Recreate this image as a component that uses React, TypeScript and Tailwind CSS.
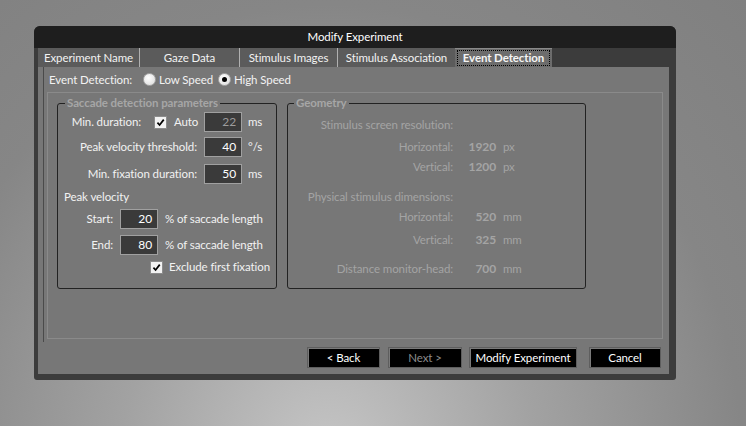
import { ReactNode } from "react";

const CheckBox = () => (
    <span className="flex h-[13px] w-[13px] shrink-0 items-center justify-center border border-[#8c8c8c] bg-[#f2f2f2]">
        <svg viewBox="0 0 10 10" className="h-[9px] w-[9px]">
            <path d="M1.6 5.2 L4 7.8 L8.6 1.8" fill="none" stroke="#000" strokeWidth="1.9" />
        </svg>
    </span>
);

const Radio = ({ checked }: { checked?: boolean }) => (
    <span className="flex h-[13px] w-[13px] shrink-0 items-center justify-center rounded-full border border-[#a8a8a8] bg-[radial-gradient(circle_at_40%_35%,#ffffff,#d8d8d8)]">
        {checked ? <span className="h-[5px] w-[5px] rounded-full bg-black" /> : null}
    </span>
);

const NumBox = ({ value, dim }: { value: string; dim?: boolean }) => (
    <div
        className={
            dim
                ? "h-[20px] w-[38px] shrink-0 border border-[#a0a0a0] bg-[#3a3a3a] pr-[5px] text-right text-[12px] leading-[18px] text-[#9c9c9c]"
                : "h-[20px] w-[38px] shrink-0 border border-[#a0a0a0] bg-[#3a3a3a] pr-[5px] text-right text-[12px] leading-[18px] text-white"
        }
    >
        {value}
    </div>
);

const GeoRow = ({ label, value, unit, className }: { label: string; value?: string; unit?: string; className: string }) => (
    <div className={"flex items-center " + className}>
        <span className="w-[165px] text-right">{label}</span>
        {value ? (
            <>
                <span className="ml-[15px] w-[28px] text-right text-[12px] font-bold">{value}</span>
                <span className="ml-[7px]">{unit}</span>
            </>
        ) : null}
    </div>
);

const Tab = ({ children, w, sep }: { children: ReactNode; w: string; sep?: boolean }) => (
    <div className={"flex h-[19px] items-center justify-center bg-[#5b5b5b] text-[#f2f2f2] " + w + (sep ? " border-r border-[#b0b0b0]" : "")}>
        {children}
    </div>
);

const Button = ({ children, w, dim }: { children: ReactNode; w: string; dim?: boolean }) => (
    <div
        className={
            "flex h-[21px] items-center justify-center border border-[#5e5e5e] bg-black shadow-[inset_1px_1px_0_#7a7a7a] " +
            w +
            (dim ? " text-[#8c8c8c]" : " text-white")
        }
    >
        {children}
    </div>
);

export default function App() {
    return (
        <div className="h-[426px] w-[746px] overflow-hidden bg-[radial-gradient(ellipse_at_44%_108%,#c6c6c6_0%,#a2a2a2_35%,#868686_70%,#808080_100%)] pt-[26px] pl-[34px] font-['Lato',sans-serif] text-[11.5px] tracking-[-0.1px]">
            <div className="flex h-[354px] w-[642px] flex-col rounded-t-[6px] rounded-b-[3px] bg-[#3c3c3c]">
                {/* title */}
                <div className="flex h-[22px] items-center justify-center rounded-t-[6px] bg-[#1e1e1e] text-white">
                    Modify Experiment
                </div>

                <div className="flex flex-1 flex-col pl-[4px] pr-[7px] pb-[6px]">
                    {/* tabs */}
                    <div className="flex h-[19px]">
                        <Tab w="w-[102px]" sep>Experiment Name</Tab>
                        <Tab w="w-[100px]" sep>Gaze Data</Tab>
                        <Tab w="w-[98px]" sep>Stimulus Images</Tab>
                        <Tab w="w-[117px]">Stimulus Association</Tab>
                        <div className="flex h-[19px] w-[97px] items-center justify-center border-t border-[#8a8a8a] bg-[#6c6c6c] px-[2px] pt-[1px] pb-[1px] font-bold text-[#f4f4f4]">
                            <div className="flex h-full w-full items-center justify-center border border-dotted border-black">
                                Event Detection
                            </div>
                        </div>
                    </div>

                    {/* client */}
                    <div className="flex flex-1 flex-col bg-[#777777]">
                        <div className="ml-[5px] h-[275px] w-[620px] border-l border-[#4a4a4a] bg-[#777777]">
                            <div className="flex h-[25px] items-center pl-[5px] text-[#f2f2f2]">
                                <span>Event Detection:</span>
                                <span className="ml-[11px]"><Radio /></span>
                                <span className="ml-[3px]">Low Speed</span>
                                <span className="ml-[5px]"><Radio checked /></span>
                                <span className="ml-[3px]">High Speed</span>
                            </div>

                            <div className="ml-[3px] flex h-[247px] w-[616px] gap-[10px] border border-[#8a8a8a] pl-[9px] pt-[2px]">
                                {/* saccade group */}
                                <fieldset className="h-[194px] w-[220px] rounded-[3px] border border-[#222222] pl-[6px]">
                                    <legend className="ml-[1px] h-[16px] px-[2px] font-bold leading-[16px] text-[#a6a6a6]">
                                        Saccade detection parameters
                                    </legend>
                                    <div className="flex flex-col text-[#f2f2f2]">
                                        <div className="mt-[1px] flex h-[20px] items-center">
                                            <span className="w-[77px] text-right">Min. duration:</span>
                                            <span className="ml-[13px]"><CheckBox /></span>
                                            <span className="ml-[7px] w-[25px]">Auto</span>
                                            <span className="ml-[5px]"><NumBox value="22" dim /></span>
                                            <span className="ml-[6px]">ms</span>
                                        </div>
                                        <div className="mt-[5px] flex h-[20px] items-center">
                                            <span className="w-[133px] text-right">Peak velocity threshold:</span>
                                            <span className="ml-[7px]"><NumBox value="40" /></span>
                                            <span className="ml-[6px]">°/s</span>
                                        </div>
                                        <div className="mt-[7px] flex h-[20px] items-center">
                                            <span className="w-[133px] text-right">Min. fixation duration:</span>
                                            <span className="ml-[7px]"><NumBox value="50" /></span>
                                            <span className="ml-[6px]">ms</span>
                                        </div>
                                        <div className="mt-[6px] flex h-[14px] items-center">Peak velocity</div>
                                        <div className="mt-[5px] flex h-[20px] items-center">
                                            <span className="w-[49px] text-right">Start:</span>
                                            <span className="ml-[7px]"><NumBox value="20" /></span>
                                            <span className="ml-[7px]">% of saccade length</span>
                                        </div>
                                        <div className="mt-[6px] flex h-[20px] items-center">
                                            <span className="w-[49px] text-right">End:</span>
                                            <span className="ml-[7px]"><NumBox value="80" /></span>
                                            <span className="ml-[7px]">% of saccade length</span>
                                        </div>
                                        <div className="mt-[5px] flex h-[14px] items-center pl-[86px]">
                                            <CheckBox />
                                            <span className="ml-[6px]">Exclude first fixation</span>
                                        </div>
                                    </div>
                                </fieldset>

                                {/* geometry group */}
                                <fieldset className="h-[194px] w-[299px] rounded-[3px] border border-[#222222]">
                                    <legend className="ml-[6px] h-[16px] px-[2px] font-bold leading-[16px] text-[#a6a6a6]">
                                        Geometry
                                    </legend>
                                    <div className="flex flex-col text-[#a4a4a4]">
                                        <GeoRow className="mt-[7px] h-[14px]" label="Stimulus screen resolution:" />
                                        <GeoRow className="mt-[8px] h-[14px]" label="Horizontal:" value="1920" unit="px" />
                                        <GeoRow className="mt-[6px] h-[14px]" label="Vertical:" value="1200" unit="px" />
                                        <GeoRow className="mt-[16px] h-[14px]" label="Physical stimulus dimensions:" />
                                        <GeoRow className="mt-[6px] h-[14px]" label="Horizontal:" value="520" unit="mm" />
                                        <GeoRow className="mt-[9px] h-[14px]" label="Vertical:" value="325" unit="mm" />
                                        <GeoRow className="mt-[15px] h-[14px]" label="Distance monitor-head:" value="700" unit="mm" />
                                    </div>
                                </fieldset>
                            </div>
                        </div>

                        {/* buttons */}
                        <div className="mt-[5px] flex pl-[269px]">
                            <Button w="w-[73px]">&lt; Back</Button>
                            <Button w="w-[74px] ml-[8px]" dim>Next &gt;</Button>
                            <Button w="w-[108px] ml-[7px]">Modify Experiment</Button>
                            <Button w="w-[72px] ml-[12px]">Cancel</Button>
                        </div>
                    </div>
                </div>
            </div>
        </div>
    );
}
